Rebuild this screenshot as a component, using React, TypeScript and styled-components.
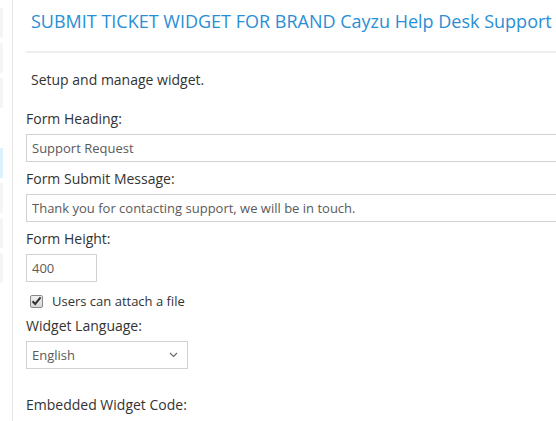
import React from "react";
import styled, { createGlobalStyle } from "styled-components";

const GlobalStyle = createGlobalStyle`
  html, body {
    margin: 0;
    padding: 0;
    background: #fff;
    overflow: hidden;
  }
  body {
    font-family: "Open Sans", "Liberation Sans", sans-serif;
    color: #333;
  }
`;

const Page = styled.div`
  display: flex;
  width: 760px;
  min-height: 421px;
`;

const Sidebar = styled.div`
  width: 12px;
  flex-shrink: 0;
  border-right: 1px solid #e6e6e6;
  padding-top: 8px;
  display: flex;
  flex-direction: column;
  gap: 5px;
`;

const SideItem = styled.div<{ $tone?: "plain" | "active" | "blank" }>`
  width: 3px;
  height: 30px;
  background: ${(p) =>
    p.$tone === "active" ? "#dcf1fb" : p.$tone === "blank" ? "transparent" : "#f5f5f5"};
`;

const Main = styled.div`
  flex: 1;
  padding-left: 13px;
`;

const Header = styled.div`
  padding: 10px 0 0 5px;
`;

const Title = styled.h1`
  margin: 0;
  font-size: 18px;
  line-height: 22px;
  font-weight: 400;
  color: #2a8ed5;
  white-space: nowrap;
`;

const Rule = styled.hr`
  margin: 19px 0 0 0;
  border: none;
  height: 2px;
  background: #eeeeee;
`;

const Intro = styled.p`
  margin: 17px 0 0 5px;
  font-size: 14px;
  line-height: 20px;
  color: #333;
`;

const Form = styled.div`
  margin-top: 19px;
  display: flex;
  flex-direction: column;
`;

const Label = styled.label<{ $gap?: number }>`
  display: block;
  font-size: 14px;
  line-height: 20px;
  color: #333;
  margin-top: ${(p) => p.$gap ?? 0}px;
  margin-bottom: 5px;
`;

const TextInput = styled.input<{ $width?: number }>`
  box-sizing: border-box;
  width: ${(p) => (p.$width ? `${p.$width}px` : "100%")};
  height: 28px;
  margin: 0 0 7px 0;
  padding: 0 5px;
  border: 1px solid #d2d2d2;
  border-radius: 0;
  font-family: "Open Sans", "Liberation Sans", sans-serif;
  font-size: 13px;
  color: #5a5a5a;
  background: #fff;
  outline: none;
`;

const CheckRow = styled.label`
  display: flex;
  align-items: center;
  height: 20px;
  margin-top: 2px;
  padding-left: 4px;
  font-size: 13px;
  color: #333;
`;

const CheckBox = styled.span`
  box-sizing: border-box;
  width: 13px;
  height: 13px;
  margin-right: 9px;
  border: 1px solid #8a8a8a;
  border-radius: 2px;
  background: linear-gradient(#f0f0f0, #d8d8d8);
  display: flex;
  align-items: center;
  justify-content: center;
`;

const SelectBox = styled.div`
  box-sizing: border-box;
  width: 162px;
  height: 28px;
  border: 1px solid #d2d2d2;
  padding: 0 9px 0 5px;
  display: flex;
  align-items: center;
  justify-content: space-between;
  font-size: 13px;
  color: #5a5a5a;
`;

const Chevron = () => (
  <svg width="9" height="6" viewBox="0 0 9 6">
    <path d="M1 1 L4.5 4.5 L8 1" fill="none" stroke="#666" strokeWidth="1.1" />
  </svg>
);

const Tick = () => (
  <svg width="11" height="10" viewBox="0 0 11 10">
    <path d="M1.5 5.2 L4.2 8 L9.6 1.4" fill="none" stroke="#333" strokeWidth="2" />
  </svg>
);

export default function App() {
  return (
    <>
      <GlobalStyle />
      <Page>
        <Sidebar>
          <SideItem />
          <SideItem />
          <SideItem />
          <SideItem $tone="blank" />
          <SideItem $tone="active" />
          <SideItem />
          <SideItem />
          <SideItem />
        </Sidebar>
        <Main>
          <Header>
            <Title>SUBMIT TICKET WIDGET FOR BRAND Cayzu Help Desk Support</Title>
          </Header>
          <Rule />
          <Intro>Setup and manage widget.</Intro>
          <Form>
            <Label>Form Heading:</Label>
            <TextInput defaultValue="Support Request" />
            <Label>Form Submit Message:</Label>
            <TextInput defaultValue="Thank you for contacting support, we will be in touch." />
            <Label>Form Height:</Label>
            <TextInput $width={71} defaultValue="400" />
            <CheckRow>
              <CheckBox>
                <Tick />
              </CheckBox>
              Users can attach a file
            </CheckRow>
            <Label $gap={5}>Widget Language:</Label>
            <SelectBox>
              <span>English</span>
              <Chevron />
            </SelectBox>
            <Label $gap={26}>Embedded Widget Code:</Label>
          </Form>
        </Main>
      </Page>
    </>
  );
}
